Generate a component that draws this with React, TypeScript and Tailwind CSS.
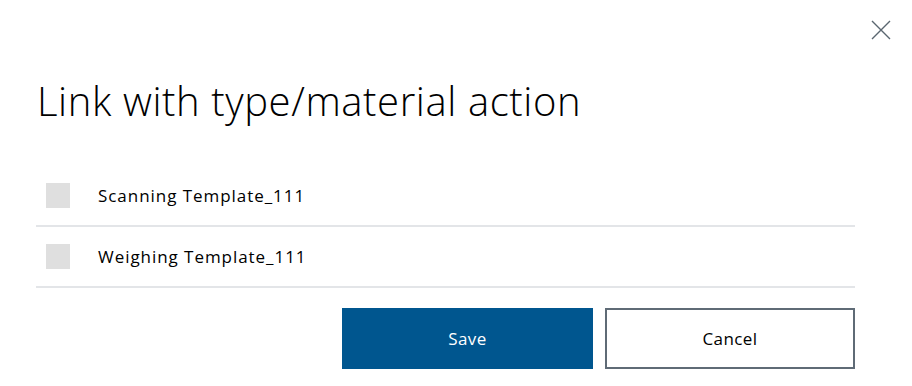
import { useState } from "react";

const items = ["Scanning Template_111", "Weighing Template_111"];

export default function App() {
  const [checked, setChecked] = useState<Record<string, boolean>>({});

  return (
    <div
      className="relative w-[912px] h-[386px] bg-white overflow-hidden text-black"
      style={{ fontFamily: '"Open Sans", "Liberation Sans", sans-serif' }}
    >
      {/* close */}
      <button className="absolute top-[19px] right-[20px] w-[22px] h-[22px] flex items-center justify-center">
        <svg width="20" height="20" viewBox="0 0 20 20" fill="none">
          <path d="M1 1L19 19M19 1L1 19" stroke="#5a6670" strokeWidth="1.4" />
        </svg>
      </button>

      <div className="pl-[36px] pr-[57px] pt-[75px]">
        <h1 className="text-[40px] font-light leading-[52px] tracking-[0.6px] pl-[1px]">
          Link with type/material action
        </h1>

        <div className="mt-[39px]">
          {items.map((item) => (
            <label
              key={item}
              className="flex items-center h-[61px] border-b-2 border-[#e3e5e8] cursor-pointer"
            >
              <span
                onClick={() => setChecked({ ...checked, [item]: !checked[item] })}
                className="ml-[10px] w-[24px] h-[25px] bg-[#dfdfdf]"
              ></span>
              <span className="ml-[28px] text-[17px] tracking-[0.95px]">{item}</span>
            </label>
          ))}
        </div>

        <div className="flex justify-end gap-[12px] mt-[20px]">
          <button className="w-[251px] h-[61px] bg-[#00568f] text-white text-[17px] tracking-[0.4px]">
            Save
          </button>
          <button className="w-[250px] h-[61px] border-2 border-[#5f6b76] text-[17px] tracking-[0.4px]">
            Cancel
          </button>
        </div>
      </div>
    </div>
  );
}
